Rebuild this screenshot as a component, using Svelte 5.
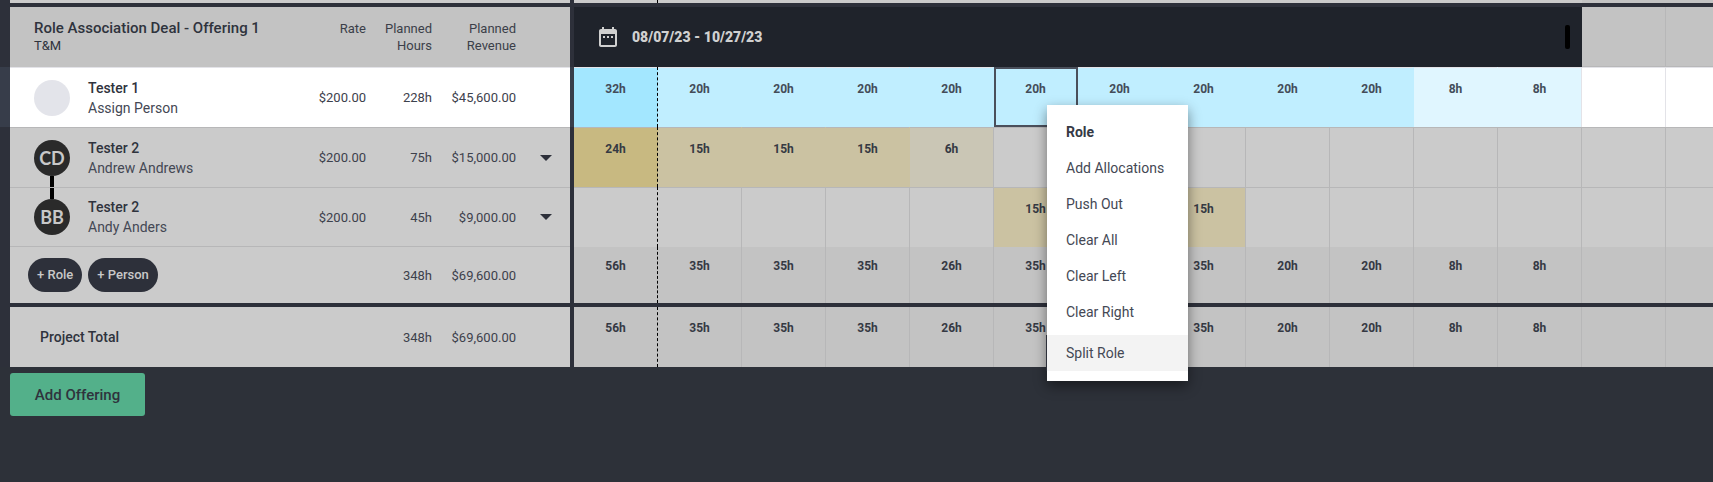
<script>
    const WEEKS = 15;
    const OFFERING_WEEKS = 12;

    const roles = [
        {
            name: 'Tester 1', person: 'Assign Person', initials: '',
            rate: '$200.00', hours: '228h', revenue: '$45,600.00',
            weeks: [32, 20, 20, 20, 20, 20, 20, 20, 20, 20, 8, 8],
            tone: 'blue', focused: true
        },
        {
            name: 'Tester 2', person: 'Andrew Andrews', initials: 'CD',
            rate: '$200.00', hours: '75h', revenue: '$15,000.00',
            weeks: [24, 15, 15, 15, 6],
            tone: 'sand', link: 'down'
        },
        {
            name: 'Tester 2', person: 'Andy Anders', initials: 'BB',
            rate: '$200.00', hours: '45h', revenue: '$9,000.00',
            weeks: [0, 0, 0, 0, 0, 15, 15, 15],
            tone: 'sand', link: 'up'
        }
    ];
    const totals = [56, 35, 35, 35, 26, 35, 35, 35, 20, 20, 8, 8];
    const columns = [...Array(WEEKS).keys()];
    const actions = ['Add Allocations', 'Push Out', 'Clear All', 'Clear Left', 'Clear Right'];

    let selected = $state(5);

    function level(h) {
        if (!h) return '';
        if (h > 20) return 'high';
        return h > 10 ? 'mid' : 'low';
    }
</script>

<main>
    <div class="board">
        <table class="roles">
            <colgroup>
                <col class="col-name" /><col class="col-rate" /><col class="col-hours" />
                <col class="col-revenue" /><col class="col-menu" />
            </colgroup>
            <tbody>
                <tr class="strip"><td></td><td></td><td></td><td></td><td></td></tr>
                <tr class="gap"><td colspan="5"></td></tr>
                <tr class="head">
                    <th class="title" scope="col">Role Association Deal - Offering 1<span>T&amp;M</span></th>
                    <th scope="col">Rate</th>
                    <th scope="col">Planned<br />Hours</th>
                    <th scope="col">Planned<br />Revenue</th>
                    <td></td>
                </tr>
                {#each roles as role}
                    <tr class="role" class:focused={role.focused}>
                        <td>
                            <div class="person">
                                <span class="avatar {role.link ?? 'empty'}">{role.initials}</span>
                                <div>
                                    <strong>{role.name}</strong>
                                    <span>{role.person}</span>
                                </div>
                            </div>
                        </td>
                        <td class="num">{role.rate}</td>
                        <td class="num">{role.hours}</td>
                        <td class="num">{role.revenue}</td>
                        <td class="expand">
                            {#if role.initials}
                                <button aria-label="Expand">
                                    <svg width="12" height="6" viewBox="0 0 12 6"><path d="M0 0h12L6 6z" /></svg>
                                </button>
                            {/if}
                        </td>
                    </tr>
                {/each}
                <tr class="subtotal">
                    <td>
                        <div class="pills">
                            <button>+ Role</button>
                            <button>+ Person</button>
                        </div>
                    </td>
                    <td></td>
                    <td class="num">348h</td>
                    <td class="num">$69,600.00</td>
                    <td></td>
                </tr>
                <tr class="gap"><td colspan="5"></td></tr>
                <tr class="total">
                    <th scope="row">Project Total</th>
                    <td></td>
                    <td class="num">348h</td>
                    <td class="num">$69,600.00</td>
                    <td></td>
                </tr>
            </tbody>
        </table>

        <div class="timeline">
            <table class="weeks">
                <colgroup>
                    {#each columns as c}<col />{/each}
                </colgroup>
                <tbody>
                    <tr class="strip">
                        {#each columns as c}<td class:now={c === 0} class:outside={c >= OFFERING_WEEKS}></td>{/each}
                    </tr>
                    <tr class="gap"><td colspan={WEEKS}></td></tr>
                    <tr class="head">
                        <th class="range" colspan={OFFERING_WEEKS} scope="colgroup">
                            <div>
                                <svg width="24" height="24" viewBox="0 0 24 24">
                                    <path d="M9 11H7v2h2v-2zm4 0h-2v2h2v-2zm4 0h-2v2h2v-2zm2-7h-1V2h-2v2H8V2H6v2H5c-1.1 0-2 .9-2 2v14c0 1.1.9 2 2 2h14c1.1 0 2-.9 2-2V6c0-1.1-.9-2-2-2zm0 16H5V9h14v11z" />
                                </svg>
                                08/07/23 - 10/27/23
                                <i class="handle"></i>
                            </div>
                        </th>
                        {#each columns.slice(OFFERING_WEEKS) as c}<td></td>{/each}
                    </tr>
                    {#each roles as role}
                        <tr class="role {role.tone}" class:focused={role.focused}>
                            {#each columns as c}
                                <td
                                    class={level(role.weeks[c])}
                                    class:now={c === 0}
                                    class:last={role.weeks[c] && !role.weeks[c + 1]}
                                    class:selected={role.focused && c === selected}
                                >{role.weeks[c] ? role.weeks[c] + 'h' : ''}</td>
                            {/each}
                        </tr>
                    {/each}
                    {#each ['subtotal', 'total'] as kind}
                        {#if kind === 'total'}
                            <tr class="gap"><td colspan={WEEKS}></td></tr>
                        {/if}
                        <tr class={kind}>
                            {#each columns as c}
                                <td class:now={c === 0}>{totals[c] ? totals[c] + 'h' : ''}</td>
                            {/each}
                        </tr>
                    {/each}
                </tbody>
            </table>
        </div>
    </div>

    <button class="add">Add Offering</button>

    <div class="menu" role="menu">
        <h2>Role</h2>
        {#each actions as action}
            <button role="menuitem">{action}</button>
        {/each}
        <button role="menuitem" class="split">Split Role</button>
    </div>
</main>

<style>
    :global(body) {
        background: #2d3139;
    }
    main {
        --dark: #2d303a;
        --line: #b7b7b8;
        position: relative;
        color: #2f333d;
        font: 14px/20px Roboto, "Liberation Sans", sans-serif;
        overflow: hidden;
    }
    main * {
        box-sizing: border-box;
    }
    button {
        font: inherit;
        color: inherit;
        border: none;
        padding: 0;
        cursor: pointer;
    }
    .board {
        display: flex;
    }
    table {
        border-collapse: separate;
        border-spacing: 0;
        table-layout: fixed;
    }
    td, th {
        padding: 0;
        height: 60px;
        text-align: left;
        background: #cbcbcb;
    }
    .strip td {
        height: 3px;
        line-height: 0;
    }
    .gap td, .weeks .gap td {
        height: 4px;
        border: none;
        line-height: 0;
        background: var(--dark);
    }
    .head th, .head td {
        background: #c3c3c3;
    }
    .subtotal td {
        height: 56px;
    }

    /* left side */
    .roles {
        width: 574px;
        flex: none;
    }
    .col-name { width: 290px; }
    .col-rate { width: 76px; }
    .col-hours { width: 66px; }
    .col-revenue { width: 84px; }
    .roles tr > :first-child {
        border-left: 10px solid var(--dark);
    }
    .roles tr > :last-child {
        border-right: 4px solid var(--dark);
    }
    .roles .focused > :first-child {
        border-left-color: #373d4a;
    }
    .roles .focused > :last-child {
        border-right-color: #373e4a;
    }
    .roles .role td {
        padding-top: 1px;
        box-shadow: inset 0 1px var(--line);
    }
    .roles .role:nth-child(6) td {
        padding-bottom: 1px;
        box-shadow: inset 0 1px var(--line), inset 0 -1px var(--line);
    }
    .roles .focused td {
        background: #fff;
        box-shadow: inset 0 1px #e3e3e8;
    }
    .roles .head th {
        padding-top: 13px;
        vertical-align: top;
        text-align: right;
        font-size: 13px;
        font-weight: 400;
        line-height: 17px;
        color: #3b3f49;
    }
    .roles .head .title {
        padding-top: 12px;
        padding-left: 24px;
        text-align: left;
        font-size: 15px;
        font-weight: 500;
        line-height: 18px;
        color: #2f333d;
    }
    .title span {
        display: block;
        font-size: 13px;
        font-weight: 400;
    }
    .num, .roles .role .num {
        padding-top: 2px;
        text-align: right;
        font-size: 13px;
        color: #3d414c;
    }
    .person {
        display: flex;
        align-items: center;
        gap: 18px;
        padding-left: 24px;
    }
    .person strong, .person div span {
        display: block;
    }
    .person strong {
        font-weight: 500;
    }
    .person div span {
        color: #444854;
    }
    .avatar {
        position: relative;
        width: 36px;
        height: 36px;
        border-radius: 50%;
        background: #2a2a2a;
        color: #c8c8c8;
        font: 700 18px/36px Lato, sans-serif;
        text-align: center;
    }
    .empty {
        background: #e3e4ea;
    }
    .down::after, .up::before {
        content: "";
        position: absolute;
        left: 16px;
        width: 4px;
        height: 11px;
        background: #000;
    }
    .down::after { top: 36px; }
    .up::before { bottom: 36px; }
    .expand {
        padding-left: 24px;
    }
    .expand button {
        display: flex;
        background: none;
    }
    .expand svg {
        fill: var(--dark);
    }
    .pills {
        display: flex;
        gap: 6px;
        padding-left: 18px;
    }
    .pills button {
        height: 34px;
        padding: 0 9px;
        border-radius: 17px;
        background: var(--dark);
        color: #c8c8c8;
        font-size: 13px;
        font-weight: 500;
    }
    .total th {
        padding-left: 30px;
        font-weight: 500;
    }

    /* weeks */
    .timeline {
        flex: 1;
        min-width: 0;
        overflow: hidden;
    }
    .weeks {
        width: 1260px;
    }
    .weeks td {
        border-right: 1px solid var(--line);
        vertical-align: top;
        text-align: center;
        font-size: 12px;
        font-weight: 700;
        line-height: 16px;
        color: #353943;
    }
    .weeks .strip td {
        border-right-color: transparent;
        line-height: 0;
    }
    .weeks .strip .outside {
        background: #c3c3c3;
    }
    .weeks .head td {
        box-shadow: inset 0 -1px var(--line);
    }
    .weeks .role td {
        padding-top: 14px;
        box-shadow: inset 0 1px var(--line);
    }
    .weeks .focused td {
        border-right-color: #e3e3e8;
        background: #fff;
        color: #434c59;
        box-shadow: inset 0 1px #e3e3e8;
    }
    .weeks .blue .high { background: #a3e7ff; }
    .weeks .blue .mid { background: #c0eeff; border-right-color: #c0eeff; }
    .weeks .blue .low { background: #e0f6ff; border-right-color: #e0f6ff; }
    .weeks .sand .high { background: #c8b981; }
    .weeks .sand .mid { background: #cbc2a2; border-right-color: #cbc2a2; }
    .weeks .sand .low { background: #cac6b5; }
    .weeks .role .last {
        border-right-color: var(--line);
    }
    .weeks .focused .last {
        border-right-color: #e3e3e8;
    }
    .weeks tr .now, .weeks .role .now {
        border-right: 1px dashed #000;
    }
    .weeks .role .selected {
        outline: 2px solid #4a4f5b;
        outline-offset: -2px;
    }
    .weeks .subtotal td, .weeks .total td {
        background: #c3c3c3;
    }
    .weeks .subtotal td { padding-top: 11px; }
    .weeks .total td { padding-top: 13px; }
    .weeks .head .range {
        background: #1f232b;
        color: #d0d0d0;
        font-weight: 900;
    }
    .range div {
        display: flex;
        align-items: center;
        gap: 12px;
        padding: 0 12px 0 22px;
    }
    .range svg {
        fill: #d0d0d0;
    }
    .handle {
        width: 5px;
        height: 24px;
        margin-left: auto;
        border-radius: 2px;
        background: #000;
    }

    .add {
        min-width: 135px;
        height: 43px;
        margin: 6px 10px;
        padding: 0 24px;
        border-radius: 3px;
        background: #53b08a;
        font-size: 15px;
        font-weight: 500;
    }

    .menu {
        position: absolute;
        top: 105px;
        left: 1047px;
        width: 141px;
        padding: 9px 0 10px;
        background: #fff;
        color: #444854;
        box-shadow: 0 5px 12px rgba(0, 0, 0, .45);
    }
    .menu h2, .menu button {
        display: block;
        width: 100%;
        margin: 0;
        padding: 0 19px;
        background: none;
        font-size: 14px;
        line-height: 36px;
        text-align: left;
        white-space: nowrap;
    }
    .menu h2 {
        color: #363a45;
        font-weight: 700;
    }
    .menu .split {
        margin-top: 5px;
        background: #f3f3f3;
        box-shadow: -1px 0 var(--dark);
    }
</style>
